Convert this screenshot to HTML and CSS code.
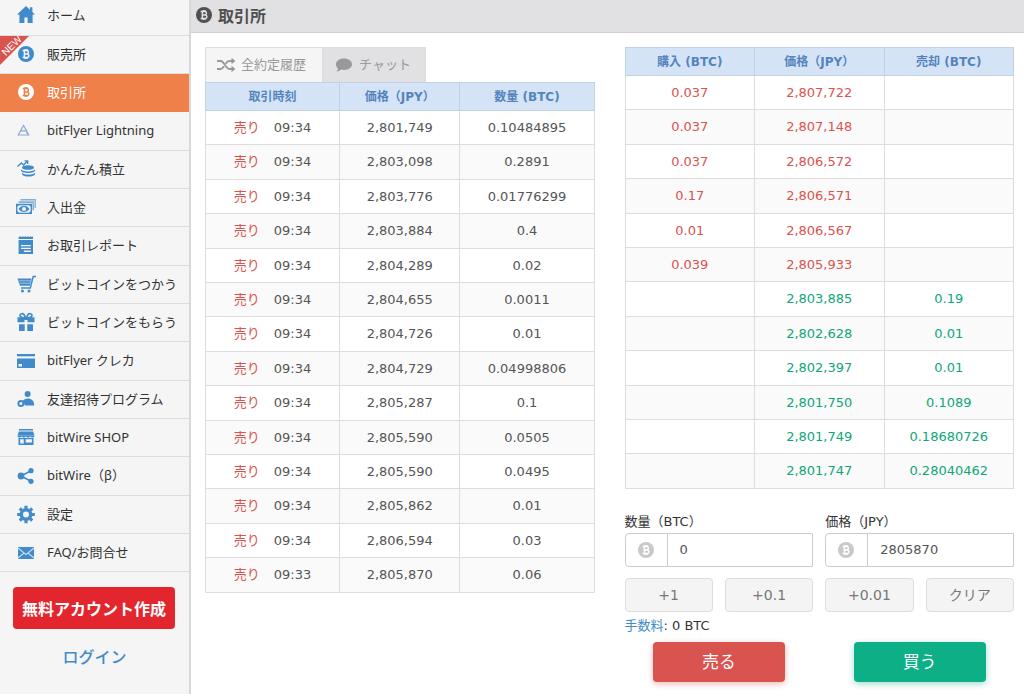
FILE: index.html
```html
<!DOCTYPE html>
<html lang="ja">
<head>
<meta charset="utf-8">
<meta name="viewport" content="width=device-width, initial-scale=1">
<title>取引所</title>
<link rel="stylesheet" href="styles.css">
</head>
<body>
<svg class="sprite" aria-hidden="true">
  <symbol id="coin" viewBox="0 0 16 16">
    <circle cx="8" cy="8" r="8" fill="currentColor"/>
    <path class="coin-mark" d="M4.600 4.600h4.200a1.600 1.600 0 0 1 0 3.300H6.400M8.800 7.900h.4a1.700 1.700 0 0 1 0 3.500H4.600M6.400 4.600v6.800M7.200 3v1.600M9 3v1.600M7.200 11.400V13M9 11.400V13"/>
  </symbol>
</svg>
<div class="app">
  <aside class="sidebar">
    <nav>
      <ul class="menu">
        <li><a href="#"><svg class="icon" viewBox="0 0 20 20"><path d="M10 1 1 9.600h2.400V18h5v-5.500h3.200V18h5V9.600H19l-2.600-2.500V2.200h-2.500v2.500z"/></svg>ホーム</a></li>
        <li><a href="#"><svg class="icon coin-small" viewBox="0 0 16 16"><use href="#coin"/></svg>販売所</a><span class="ribbon"><span class="ribbon-text">NEW</span></span></li>
        <li class="active"><a href="#"><svg class="icon coin-small" viewBox="0 0 16 16"><use href="#coin"/></svg>取引所</a></li>
        <li><a href="#"><svg class="icon" viewBox="0 0 20 20"><path d="M7.500 5.500 2.200 15h10.600zM5 10.800h5.200L11.500 14" fill="none" stroke="#8aabd3" stroke-width="1.200"/></svg>bitFlyer Lightning</a></li>
        <li><a href="#"><svg class="icon" viewBox="0 0 20 20"><path d="M1.500 7.500 5.500 4l2 2 4-4M8.500 1.800h3.200V5" fill="none" stroke="currentColor" stroke-width="1.300"/><ellipse cx="12" cy="8.500" rx="6" ry="2.300"/><path d="M5 10c.5 3.300 13.500 3.300 14 0v1.700c-1 3-13 3-14 0zM6 13.700c2 2.500 11 2.500 13 0v1.200c-.5 3.500-12 3.500-13 0z"/></svg>かんたん積立</a></li>
        <li><a href="#"><svg class="icon" viewBox="0 0 20 20"><path d="M2.500 6V4.200H18v9h-1.500V6zM4.500 3.500V2h15.400v9h-1.300V3.500z" opacity=".65"/><path fill-rule="evenodd" d="M0 6.800h16V17H0zm1.300 3v4.300l1.700 1.600h10l1.700-1.600V9.800L13 8.200H3z"/><path fill-rule="evenodd" d="M2.500 12c3-4.300 8-4.300 11 0-3 4-8 4-11 0zM8 9.900a2 2 0 1 0 0 4 2 2 0 0 0 0-4z"/></svg>入出金</a></li>
        <li><a href="#"><svg class="icon" viewBox="0 0 20 20"><path d="m3 2 1.200-.8 1.300.8 1.300-.8L8 2l1.300-.8 1.300.8 1.300-.8 1.300.8 1.300-.8 1.200.8 1-.8.300.800v2H2.600V2z"/><path fill-rule="evenodd" d="M2.600 5H17v14H2.600zm2.300 5v1.300h9.900V10zm0 2.800v1.300h9.900v-1.300zm3 2.800v1.300h7v-1.300z"/></svg>お取引レポート</a></li>
        <li><a href="#"><svg class="icon" viewBox="0 0 20 20"><path d="M1.500 4.500h14l-1.800 7.300H4z"/><path d="M20 2.500h-2.800L14.300 14H5" fill="none" stroke="currentColor" stroke-width="1.500"/><circle cx="6.500" cy="17" r="1.500"/><circle cx="13" cy="17" r="1.500"/><path d="M3 6.800h12M3.700 9.200H14" stroke="#f5f5f5" stroke-width=".5"/></svg>ビットコインをつかう</a></li>
        <li><a href="#"><svg class="icon" viewBox="0 0 20 20"><path d="M1.500 5.200h7v5h-7zM11.500 5.200h7v5h-7zM3 12.300h5.700V19H3zM11.300 12.300H17V19h-5.700zM8 5h4v3H8z"/><path d="M9.500 5.800C7 6 4 5 4 3.200s3-1.900 4-.7l1.700 3.300M10.500 5.800C13 6 16 5 16 3.200s-3-1.900-4-.7l-1.700 3.300" fill="none" stroke="currentColor" stroke-width="1.700"/></svg>ビットコインをもらう</a></li>
        <li><a href="#"><svg class="icon" viewBox="0 0 20 20"><path d="M1 4h18v2.300H1z"/><path fill-rule="evenodd" d="M1 8.500h18V18H1zm1.500 5.500v2.500H6V14z"/></svg>bitFlyer クレカ</a></li>
        <li><a href="#"><svg class="icon" viewBox="0 0 20 20"><circle cx="11.600" cy="5" r="3"/><path d="M8.700 16.500c-.2-2.300-1.200-3.200-2.200-4 1-2.300 3-3 5.300-3 3.600 0 6.400 2 6.400 7z"/><path d="M4.900 11a3.500 3.500 0 1 1 0 7 3.500 3.500 0 0 1 0-7zm0 2a1.500 1.500 0 1 0 0 3 1.500 1.500 0 0 0 0-3z" fill-rule="evenodd"/></svg>友達招待プログラム</a></li>
        <li><a href="#"><svg class="icon" viewBox="0 0 20 20"><path d="M3 2h14v1.500H3zM2.800 4.500h14.400l1.300 4.300H1.500zM1.500 9h17c-.5 2-3.300 2-4.250.5-1 1.500-3.300 1.500-4.250 0-1 1.500-3.300 1.500-4.250 0C4.800 11 2 11 1.500 9z"/><path fill-rule="evenodd" d="M2.500 11h15v7h-15zm1.700 1.200V16.500h3.500v-4.300zm5.500 0v3.300h6.200v-3.300z"/></svg>bitWire SHOP</a></li>
        <li><a href="#"><svg class="icon" viewBox="0 0 20 20"><circle cx="5" cy="11" r="3.400"/><circle cx="15" cy="5.700" r="2.600"/><circle cx="15" cy="16.300" r="2.600"/><path d="M15 5.700 5 11l10 5.300" fill="none" stroke="currentColor" stroke-width="1.600"/></svg>bitWire（β）</a></li>
        <li><a href="#"><svg class="icon" viewBox="0 0 20 20"><circle cx="10" cy="10.500" r="4.700" fill="none" stroke="currentColor" stroke-width="3.400"/><path d="M10 1.700v3M10 16.300v3M1.200 10.500h3M15.800 10.500h3M3.800 4.300l2 2M14.200 14.700l2 2M3.800 16.700l2-2M14.200 6.300l2-2" stroke="currentColor" stroke-width="3.200"/></svg>設定</a></li>
        <li><a href="#"><svg class="icon" viewBox="0 0 20 20"><rect x="2" y="5" width="16" height="12"/><path d="m2 6 8 6.500L18 6M2 16l6-5M18 16l-6-5" fill="none" stroke="#c5daee" stroke-width="1.100"/></svg>FAQ/お問合せ</a></li>
      </ul>
    </nav>
    <a class="signup" href="#">無料アカウント作成</a>
    <a class="login" href="#">ログイン</a>
  </aside>

  <main class="main">
    <header class="titlebar">
      <svg class="title-icon" viewBox="0 0 16 16"><use href="#coin"/></svg>
      <h1>取引所</h1>
    </header>
    <div class="panels">
      <section class="history">
        <div class="tabs" role="tablist">
          <button class="tab selected" type="button" role="tab" aria-selected="true"><svg viewBox="0 0 20 16"><path d="M1 4h3.500c4 0 5 8 9 8H17M1 12h3.500c1.600 0 2.600-1.200 3.500-2.700M9.700 6.700C10.600 5.200 11.700 4 13.500 4H17" fill="none" stroke="currentColor" stroke-width="1.800"/><path d="m15.500.800 4 3.200-4 3.200zM15.500 8.800l4 3.200-4 3.200z"/></svg>全約定履歴</button>
          <button class="tab" type="button" role="tab" aria-selected="false"><svg viewBox="0 0 20 16"><path d="M10 1.500c4.700 0 8 2.500 8 5.700s-3.300 5.700-8 5.700c-1 0-2-.1-2.800-.3C5.700 13.900 4.100 14.500 2.200 14.500c1-.8 1.700-1.700 1.800-3C2.600 10.400 2 8.900 2 7.200c0-3.200 3.300-5.700 8-5.700z"/></svg>チャット</button>
        </div>
        <table class="grid history-table">
          <thead><tr><th scope="col">取引時刻</th><th scope="col">価格（JPY）</th><th scope="col">数量 (BTC)</th></tr></thead>
          <tbody>
            <tr><td><span class="side">売り</span>09:34</td><td>2,801,749</td><td>0.10484895</td></tr>
            <tr><td><span class="side">売り</span>09:34</td><td>2,803,098</td><td>0.2891</td></tr>
            <tr><td><span class="side">売り</span>09:34</td><td>2,803,776</td><td>0.01776299</td></tr>
            <tr><td><span class="side">売り</span>09:34</td><td>2,803,884</td><td>0.4</td></tr>
            <tr><td><span class="side">売り</span>09:34</td><td>2,804,289</td><td>0.02</td></tr>
            <tr><td><span class="side">売り</span>09:34</td><td>2,804,655</td><td>0.0011</td></tr>
            <tr><td><span class="side">売り</span>09:34</td><td>2,804,726</td><td>0.01</td></tr>
            <tr><td><span class="side">売り</span>09:34</td><td>2,804,729</td><td>0.04998806</td></tr>
            <tr><td><span class="side">売り</span>09:34</td><td>2,805,287</td><td>0.1</td></tr>
            <tr><td><span class="side">売り</span>09:34</td><td>2,805,590</td><td>0.0505</td></tr>
            <tr><td><span class="side">売り</span>09:34</td><td>2,805,590</td><td>0.0495</td></tr>
            <tr><td><span class="side">売り</span>09:34</td><td>2,805,862</td><td>0.01</td></tr>
            <tr><td><span class="side">売り</span>09:34</td><td>2,806,594</td><td>0.03</td></tr>
            <tr><td><span class="side">売り</span>09:33</td><td>2,805,870</td><td>0.06</td></tr>
          </tbody>
        </table>
      </section>

      <section class="trade">
        <table class="grid board">
          <thead><tr><th scope="col">購入 (BTC)</th><th scope="col">価格（JPY）</th><th scope="col">売却 (BTC)</th></tr></thead>
          <tbody>
            <tr class="ask"><td>0.037</td><td>2,807,722</td><td></td></tr>
            <tr class="ask"><td>0.037</td><td>2,807,148</td><td></td></tr>
            <tr class="ask"><td>0.037</td><td>2,806,572</td><td></td></tr>
            <tr class="ask"><td>0.17</td><td>2,806,571</td><td></td></tr>
            <tr class="ask"><td>0.01</td><td>2,806,567</td><td></td></tr>
            <tr class="ask"><td>0.039</td><td>2,805,933</td><td></td></tr>
            <tr class="bid"><td></td><td>2,803,885</td><td>0.19</td></tr>
            <tr class="bid"><td></td><td>2,802,628</td><td>0.01</td></tr>
            <tr class="bid"><td></td><td>2,802,397</td><td>0.01</td></tr>
            <tr class="bid"><td></td><td>2,801,750</td><td>0.1089</td></tr>
            <tr class="bid"><td></td><td>2,801,749</td><td>0.18680726</td></tr>
            <tr class="bid"><td></td><td>2,801,747</td><td>0.28040462</td></tr>
          </tbody>
        </table>
        <form class="order">
          <div class="fields">
            <div class="field">
              <label for="amount">数量（BTC）</label>
              <div class="input-group"><span class="addon"><svg viewBox="0 0 16 16"><use href="#coin"/></svg></span><input id="amount" type="text" value="0"></div>
            </div>
            <div class="field">
              <label for="price">価格（JPY）</label>
              <div class="input-group"><span class="addon"><svg viewBox="0 0 16 16"><use href="#coin"/></svg></span><input id="price" type="text" value="2805870"></div>
            </div>
          </div>
          <div class="steps">
            <button type="button">+1</button>
            <button type="button">+0.1</button>
            <button type="button">+0.01</button>
            <button type="button">クリア</button>
          </div>
          <p class="fee"><a href="#">手数料</a>: 0 BTC</p>
          <div class="actions">
            <button class="sell" type="button">売る</button>
            <button class="buy" type="button">買う</button>
          </div>
        </form>
      </section>
    </div>
  </main>
</div>
</body>
</html>
```
FILE: styles.css
```css
* { box-sizing: border-box; }

body {
  margin: 0;
  background: #fff;
  color: #333;
  font: 13px/20px "DejaVu Sans", "Noto Sans CJK JP", sans-serif;
}

a { color: #428bca; text-decoration: none; }
button, input { font: inherit; }
.sprite { position: absolute; width: 0; height: 0; }

.coin-mark { fill: none; stroke: var(--mark, #f5f5f5); stroke-width: 1.5; }

.app { display: flex; min-height: 100vh; }

/* Sidebar */
.sidebar {
  flex: 0 0 191px;
  display: flex;
  flex-direction: column;
  overflow: hidden;
  background: #f5f5f5;
  border-right: 2px solid #d9d9d9;
}

.menu { margin: -3px 0 0; padding: 0; list-style: none; }
.menu li { position: relative; border-bottom: 1px solid #ddd; }
.menu a {
  display: flex;
  align-items: center;
  gap: 11px;
  height: 37px;
  padding: 0 0 2px 16px;
  color: #333;
  font-family: "Noto Sans", "Noto Sans CJK JP", sans-serif;
  white-space: nowrap;
}
.menu li:nth-child(3n + 1) a { height: 38px; }
.icon { flex: none; width: 20px; height: 20px; color: #428bca; fill: currentColor; }
.coin-small { padding: 2px; }
.menu .active { background: #ef8049; border-color: #ef8049; }
.menu .active a { color: #fff; }
.menu .active .icon { color: #fff; --mark: #ef8049; }

/* Corner flag over the menu row */
.ribbon {
  position: absolute;
  top: 0;
  left: 0;
  width: 29px;
  height: 29px;
  background: #d9534f;
  clip-path: polygon(0 0, 100% 0, 0 100%);
}
.ribbon-text {
  display: block;
  width: 24px;
  color: #fff;
  font: 10px/20px "Liberation Sans", sans-serif;
  text-align: center;
  transform: rotate(-45deg);
}

.signup {
  margin: 15px 14px 0 13px;
  border-radius: 4px;
  background: #e3262e;
  color: #fff;
  font: bold 16px/42px "Noto Sans CJK JP", sans-serif;
  text-align: center;
  white-space: nowrap;
}
.login {
  margin-top: 15px;
  font: 500 16px/24px "Noto Sans CJK JP", sans-serif;
  text-align: center;
}

/* Main area */
.main { flex: 1; min-width: 0; }

.titlebar {
  display: flex;
  align-items: center;
  gap: 6px;
  height: 33px;
  padding: 0 5px 2px;
  background: #e1e1e4;
  border-bottom: 1px solid #d0d0d3;
}
.title-icon { width: 16px; height: 16px; color: #505050; --mark: #e1e1e4; }
.titlebar h1 { margin: 0; color: #505050; font: bold 16px/24px "Noto Sans CJK JP", sans-serif; }

.panels {
  display: grid;
  grid-template-columns: repeat(2, minmax(0, 1fr));
  gap: 30px;
  padding: 14px 10px 12px 14px;
}

/* Tabs */
.tabs { display: flex; }
.tab {
  display: flex;
  align-items: center;
  gap: 5px;
  height: 35px;
  padding: 0 14px 0 10px;
  border: 1px solid #ddd;
  border-bottom: 0;
  background: #e1e1e3;
  color: #999;
}
.tab.selected { padding-right: 16px; background: #f5f5f5; }
.tab svg { width: 20px; height: 16px; fill: currentColor; }

/* Tables */
.grid { width: 100%; border-collapse: collapse; table-layout: fixed; }
.grid th, .grid td { padding: 0; border: 1px solid #ddd; text-align: center; }
.grid th {
  height: 28px;
  border-color: #c2d2e3;
  background: #d4e3f6;
  color: #5484bd;
  font-size: 12px;
}
.grid td { height: 34px; color: #555; }
.grid tr:nth-child(5n + 2) td, .grid tr:nth-child(5n + 4) td { height: 35px; }
.grid tbody tr:nth-child(even) { background: #fafafa; }
.history-table th:nth-child(2) { width: 31%; }
.side { margin-right: 14px; color: #d9534f; }
.grid .ask td { color: #d9534f; }
.grid .bid td { color: #0fa678; }

/* Order form */
.order { margin-top: 23px; }
.fields, .actions { display: grid; grid-template-columns: repeat(2, minmax(0, 1fr)); gap: 12px; }
.field label { display: block; margin-bottom: 1px; }
.input-group { display: flex; height: 34px; border: 1px solid #ccc; border-radius: 4px 0 0 4px; }
.addon { display: flex; align-items: center; padding: 0 13px 0 12px; border-right: 1px solid #ccc; }
.addon svg { width: 16px; height: 16px; color: #c9c9c9; --mark: #fff; }
.input-group input {
  flex: 1;
  min-width: 0;
  padding: 0 12px;
  border: 0;
  background: #fff;
  color: #555;
}

.steps { display: grid; grid-template-columns: repeat(4, minmax(0, 1fr)); gap: 12px; margin-top: 11px; }
.steps button {
  height: 34px;
  padding: 0;
  border: 1px solid #ddd;
  border-radius: 4px;
  background: #f4f4f4;
  color: #777;
  font-size: 14px;
}
.fee { margin: 4px 0 6px; }

.actions button {
  justify-self: center;
  width: 70%;
  height: 40px;
  padding: 0;
  border: 0;
  border-radius: 4px;
  color: #fff;
  font-size: 17px;
}
.actions .sell { background: #d9534f; box-shadow: 0 2px 6px #d9534f66; }
.actions .buy { background: #0db086; box-shadow: 0 2px 6px #0db08666; }
```
